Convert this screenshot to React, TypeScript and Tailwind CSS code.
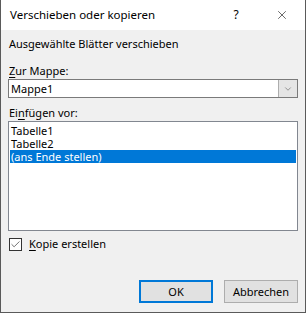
import { Check, ChevronDown, X } from "lucide-react"

export default function App() {
  return (
    <div className="w-[306px] h-[313px] bg-[#f0f0f0] border border-[#5a5a5a] border-t-0 flex flex-col text-[11px] text-black font-['Segoe_UI','Noto_Sans',sans-serif] leading-[14px]">
      {/* title bar */}
      <div className="h-[30px] bg-white flex items-center pl-[9px]">
        <span className="text-[11.5px] flex-1">Verschieben oder kopieren</span>
        <span className="w-[46px] text-center text-[12px]">?</span>
        <span className="w-[46px] flex justify-center">
          <X className="w-[14px] h-[14px]" strokeWidth={1} />
        </span>
      </div>

      <div className="flex flex-col px-[7px]">
        <div className="mt-[7px] pl-[1px] h-[14px]">Ausgewählte Blätter verschieben</div>

        <div className="mt-[13px] pl-[1px] h-[14px]">
          <span className="underline underline-offset-2">Z</span>ur Mappe:
        </div>
        <div className="mt-[1px] h-[19px] flex bg-white border border-[#7a7a7a]">
          <span className="flex-1 pl-[2px] flex items-center">Mappe1</span>
          <span className="w-[19px] bg-[#e5e5e5] border-l border-[#adadad] flex items-center justify-center">
            <ChevronDown className="w-[10px] h-[10px] text-[#606060]" strokeWidth={1.5} />
          </span>
        </div>

        <div className="mt-[8px] pl-[1px] h-[14px]">
          Ei<span className="underline underline-offset-2">n</span>fügen vor:
        </div>
        <div className="mt-[1px] h-[110px] bg-white border border-[#828790] px-[1px] py-[2px] flex flex-col">
          <div className="h-[13px] leading-[13px] pl-[1px]">Tabelle1</div>
          <div className="h-[13px] leading-[13px] pl-[1px]">Tabelle2</div>
          <div className="h-[13px] leading-[13px] pl-[1px] bg-[#0078d7] text-white">(ans Ende stellen)</div>
        </div>

        <div className="mt-[6px] flex items-center gap-[7px] pl-[1px]">
          <span className="w-[13px] h-[13px] bg-white border border-[#333] flex items-center justify-center">
            <Check className="w-[11px] h-[11px] text-[#333]" strokeWidth={1.5} />
          </span>
          <span>
            <span className="underline underline-offset-2">K</span>opie erstellen
          </span>
        </div>
      </div>

      <div className="mt-auto mb-[9px] flex justify-end gap-[11px] pr-[7px]">
        <button className="w-[74px] h-[23px] bg-[#e1e1e1] border-2 border-[#0078d7] text-[11px]">OK</button>
        <button className="w-[74px] h-[23px] bg-[#e1e1e1] border border-[#adadad] text-[11px]">Abbrechen</button>
      </div>
    </div>
  )
}
